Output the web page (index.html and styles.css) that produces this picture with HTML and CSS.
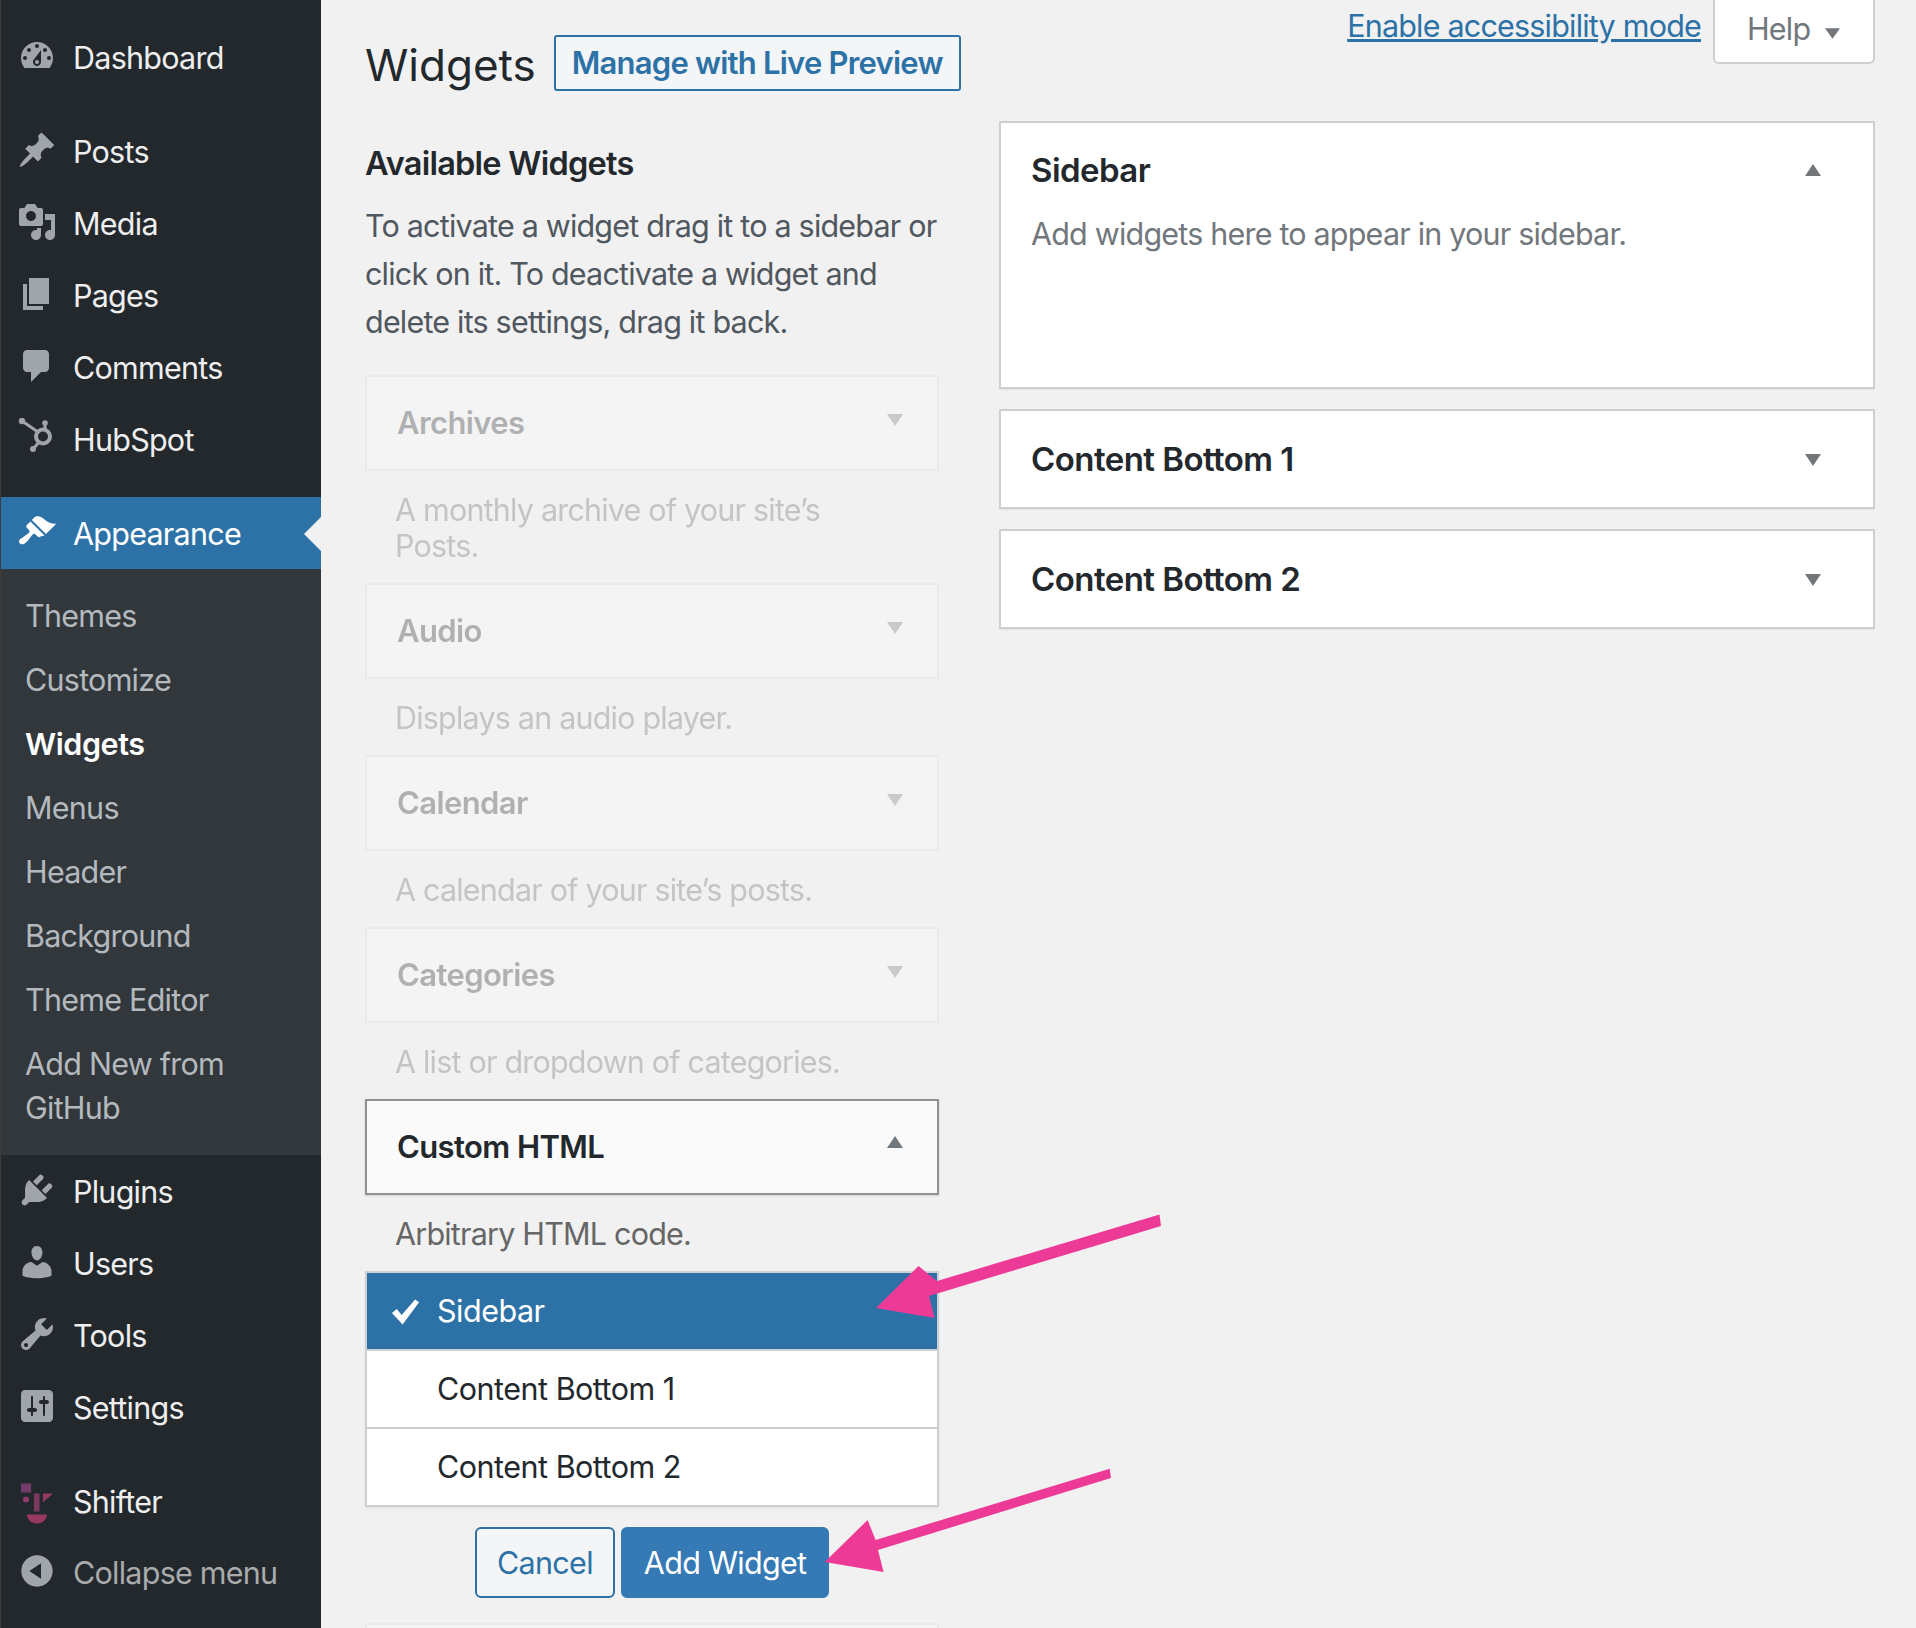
FILE: index.html
```html
<!DOCTYPE html>
<html lang="en">
<head>
<meta charset="utf-8">
<title>Widgets</title>
<link rel="stylesheet" href="styles.css">
</head>
<body>
<div class="page">
  <nav class="menu">
    <a class="item first"><svg class="ico" viewBox="0 0 20 20"><path fill-rule="evenodd" d="M3.76 16h12.48c1.1-1.37 1.76-3.11 1.76-5 0-4.42-3.58-8-8-8s-8 3.58-8 8c0 1.89.66 3.63 1.76 5zM10 4c.55 0 1 .45 1 1s-.45 1-1 1-1-.45-1-1 .45-1 1-1zM6 6c.55 0 1 .45 1 1s-.45 1-1 1-1-.45-1-1 .45-1 1-1zm8 0c.55 0 1 .45 1 1s-.45 1-1 1-1-.45-1-1 .45-1 1-1zm-5.37 5.55L12 7v6c0 1.1-.9 2-2 2s-2-.9-2-2c0-.57.24-1.08.63-1.45zM4 10c.55 0 1 .45 1 1s-.45 1-1 1-1-.45-1-1 .45-1 1-1zm12 0c.55 0 1 .45 1 1s-.45 1-1 1-1-.45-1-1 .45-1 1-1zm-5 3c0-.55-.45-1-1-1s-1 .45-1 1 .45 1 1 1 1-.45 1-1z"/></svg>Dashboard</a>
    <a class="item gap"><svg class="ico" viewBox="0 0 20 20"><path d="M10.44 3.02l1.82-1.82 6.36 6.35-1.83 1.82c-1.05-.68-2.48-.57-3.41.36l-.75.75c-.92.93-1.04 2.35-.35 3.41l-1.83 1.82-2.41-2.41-2.8 2.79c-.42.42-3.38 2.71-3.8 2.29s1.86-3.39 2.28-3.81l2.79-2.79L4.1 9.36l1.83-1.82c1.05.69 2.48.57 3.4-.36l.75-.75c.93-.92 1.05-2.35.36-3.41z"/></svg>Posts</a>
    <a class="item"><svg class="ico" viewBox="0 0 20 20"><path fill-rule="evenodd" d="M13 11V4c0-.55-.45-1-1-1h-1.67L9 1H5L3.67 3H2c-.55 0-1 .45-1 1v7c0 .55.45 1 1 1h10c.55 0 1-.45 1-1zM7 4.5c1.38 0 2.5 1.12 2.5 2.5S8.38 9.5 7 9.5 4.5 8.38 4.5 7 5.62 4.5 7 4.5zM14 6h5v10.5c0 1.38-1.12 2.5-2.5 2.5S14 17.88 14 16.5s1.12-2.5 2.5-2.5c.17 0 .34.02.5.05V9h-3V6zm-4 8.05V13h2v3.5c0 1.38-1.12 2.5-2.5 2.5S7 17.88 7 16.5 8.12 14 9.5 14c.17 0 .34.02.5.05z"/></svg>Media</a>
    <a class="item"><svg class="ico" viewBox="0 0 20 20"><path d="M6 15V2h10v13H6zm-1 1h8v2H3V5h2v11z"/></svg>Pages</a>
    <a class="item"><svg class="ico" viewBox="0 0 20 20"><path d="M5 2h9c1.1 0 2 .9 2 2v7c0 1.1-.9 2-2 2h-2l-5 5v-5H5c-1.1 0-2-.9-2-2V4c0-1.1.9-2 2-2z"/></svg>Comments</a>
    <a class="item"><svg class="ico" viewBox="0 0 40 40"><circle class="line" cx="26" cy="18.5" r="7"/><path class="line thin" d="M5 3l16 11M28 5v7M17 30l5-6"/><circle cx="5" cy="3" r="3.2"/><circle cx="28" cy="5" r="2.8"/><circle cx="16" cy="31" r="3"/></svg>HubSpot</a>
    <a class="item gap current"><svg class="ico" viewBox="0 0 20 20"><path d="M14.48 11.06L7.41 3.99l1.5-1.5c.5-.56 2.3-.47 3.51.32 1.21.8 1.43 1.28 2.91 2.1 1.18.64 2.45 1.26 4.45.85zm-.71.71L6.7 4.7 4.93 6.47c-.39.39-.39 1.02 0 1.41l1.06 1.06c.39.39.39 1.03 0 1.42-.6.6-1.43 1.11-2.21 1.69-.35.26-.7.53-1.01.84C1.43 13.23.4 14.67 1.47 15.74c1.06 1.06 2.5.04 3.84-1.3.31-.31.58-.66.85-1.01.57-.78 1.08-1.61 1.69-2.21.39-.39 1.02-.39 1.41 0l1.06 1.06c.39.39 1.02.39 1.41 0z"/></svg>Appearance</a>
    <div class="sub">
      <a class="subitem">Themes</a>
      <a class="subitem">Customize</a>
      <a class="subitem on">Widgets</a>
      <a class="subitem">Menus</a>
      <a class="subitem">Header</a>
      <a class="subitem">Background</a>
      <a class="subitem">Theme Editor</a>
      <a class="subitem wrap">Add New from GitHub</a>
    </div>
    <a class="item"><svg class="ico" viewBox="0 0 20 20"><path d="M13.11 4.36L9.87 7.6 8 5.73l3.24-3.24c.35-.34 1.05-.2 1.56.32.52.51.66 1.21.31 1.55zm-8 1.77l.91-1.12 9.01 9.01-1.19.84c-.71.71-2.63 1.16-3.82 1.16H6.14L4.9 17.26c-.59.59-1.54.59-2.12 0-.59-.58-.59-1.53 0-2.12l1.24-1.24v-3.88c0-1.13.4-3.19 1.09-3.89zm7.26 3.97l3.24-3.24c.34-.35 1.04-.21 1.55.31.52.51.66 1.21.31 1.55l-3.24 3.25z"/></svg>Plugins</a>
    <a class="item"><svg class="ico" viewBox="0 0 20 20"><path d="M10 9.25c-2.27 0-2.73-3.44-2.73-3.44C7 4.02 7.82 2 9.97 2c2.16 0 2.98 2.02 2.71 3.81 0 0-.41 3.44-2.68 3.44zm0 2.57L12.72 10c2.39 0 4.52 2.33 4.52 4.53v2.49s-3.65 1.13-7.24 1.13c-3.65 0-7.24-1.13-7.24-1.13v-2.49c0-2.25 1.94-4.48 4.47-4.48z"/></svg>Users</a>
    <a class="item"><svg class="ico" viewBox="0 0 20 20"><path fill-rule="evenodd" d="M16.68 9.77c-1.34 1.34-3.3 1.67-4.95.99l-5.41 6.52c-.99.99-2.59.99-3.58 0s-.99-2.59 0-3.57l6.52-5.42c-.68-1.65-.35-3.61.99-4.95 1.28-1.28 3.12-1.62 4.72-1.06l-2.89 2.89 2.82 2.82 2.86-2.87c.53 1.58.18 3.39-1.08 4.65zM3.81 16.21c.4.39 1.04.39 1.43 0 .4-.4.4-1.04 0-1.43-.39-.4-1.03-.4-1.43 0-.39.39-.39 1.03 0 1.43z"/></svg>Tools</a>
    <a class="item"><svg class="ico" viewBox="0 0 20 20"><path fill-rule="evenodd" d="M18 16V4c0-1.1-.9-2-2-2H4c-1.1 0-2 .9-2 2v12c0 1.1.9 2 2 2h12c1.1 0 2-.9 2-2zM8 11h1c.55 0 1 .45 1 1s-.45 1-1 1H8v1.5c0 .28-.22.5-.5.5s-.5-.22-.5-.5V13H6c-.55 0-1-.45-1-1s.45-1 1-1h1V5.5c0-.28.22-.5.5-.5s.5.22.5.5V11zm5-2h-1c-.55 0-1-.45-1-1s.45-1 1-1h1V5.5c0-.28.22-.5.5-.5s.5.22.5.5V7h1c.55 0 1 .45 1 1s-.45 1-1 1h-1v5.5c0 .28-.22.5-.5.5s-.5-.22-.5-.5V9z"/></svg>Settings</a>
    <a class="item gap"><svg class="ico visible" viewBox="0 0 40 40"><rect class="s1" x="4" y="3.5" width="10" height="9"/><circle class="s2" cx="9" cy="19.5" r="3"/><rect class="s3" x="17" y="13.5" width="5.5" height="18"/><path class="s4" d="M26 13.5h10l-10 9z"/><path class="s5" d="M10 34.5h20c0 5-4.5 9-10 9s-10-4-10-9z"/></svg>Shifter</a>
    <a class="item collapse"><svg class="ico" viewBox="0 0 20 20"><path fill-rule="evenodd" d="M10 2.16c4.33 0 7.84 3.51 7.84 7.84s-3.51 7.84-7.84 7.84S2.16 14.33 2.16 10 5.71 2.16 10 2.16zm2 11.72V6.12L6.18 9.97z"/></svg>Collapse menu</a>
  </nav>

  <main class="main">
    <header class="head">
      <h1 class="title">Widgets</h1>
      <a class="live">Manage with Live Preview</a>
      <div class="meta">
        <a class="access">Enable accessibility mode</a>
        <div class="help">Help<svg class="help-arrow" viewBox="0 0 14 10"><path d="M0 0h14L7 10z"/></svg></div>
      </div>
    </header>
    <div class="cols">
      <section class="avail">
        <h2 class="avail-title">Available Widgets</h2>
        <p class="intro">To activate a widget drag it to a sidebar or click on it. To deactivate a widget and delete its settings, drag it back.</p>

        <div class="faded">
          <div class="widget"><span>Archives</span><svg class="tri" viewBox="0 0 16 12"><path d="M0 0h16L8 12z"/></svg></div>
          <p class="desc">A monthly archive of your site’s Posts.</p>
          <div class="widget"><span>Audio</span><svg class="tri" viewBox="0 0 16 12"><path d="M0 0h16L8 12z"/></svg></div>
          <p class="desc">Displays an audio player.</p>
          <div class="widget"><span>Calendar</span><svg class="tri" viewBox="0 0 16 12"><path d="M0 0h16L8 12z"/></svg></div>
          <p class="desc">A calendar of your site’s posts.</p>
          <div class="widget"><span>Categories</span><svg class="tri" viewBox="0 0 16 12"><path d="M0 0h16L8 12z"/></svg></div>
          <p class="desc">A list or dropdown of categories.</p>
        </div>

        <div class="widget open"><span>Custom HTML</span><svg class="tri up" viewBox="0 0 16 12"><path d="M8 0l8 12H0z"/></svg></div>
        <p class="desc">Arbitrary HTML code.</p>
        <ul class="chooser">
          <li class="choice selected"><svg class="check" viewBox="0 0 30 26"><path d="M1 14l5-4 5 6L25 0l4 3-17 23z"/></svg>Sidebar</li>
          <li class="choice">Content Bottom 1</li>
          <li class="choice">Content Bottom 2</li>
        </ul>
        <div class="actions">
          <a class="btn">Cancel</a>
          <a class="btn primary">Add Widget</a>
        </div>
        <div class="faded"><div class="widget"></div></div>
      </section>

      <section class="areas">
        <div class="area tall">
          <div class="area-head"><span>Sidebar</span><svg class="tri" viewBox="0 0 16 12"><path d="M8 0l8 12H0z"/></svg></div>
          <p class="area-desc">Add widgets here to appear in your sidebar.</p>
        </div>
        <div class="area">
          <div class="area-head"><span>Content Bottom 1</span><svg class="tri" viewBox="0 0 16 12"><path d="M0 0h16L8 12z"/></svg></div>
        </div>
        <div class="area">
          <div class="area-head"><span>Content Bottom 2</span><svg class="tri" viewBox="0 0 16 12"><path d="M0 0h16L8 12z"/></svg></div>
        </div>
      </section>
    </div>
  </main>

  <svg class="arrows" viewBox="0 0 1916 1628">
    <path d="M876 1308L918.5 1266L937 1281L1159.5 1214.6L1161 1226L929 1296L934.6 1318z"/>
    <path d="M824.7 1562L867.6 1520L875.6 1540L1109.7 1468.7L1111 1478L878 1550L883.6 1572z"/>
  </svg>
</div>
</body>
</html>
```
FILE: styles.css
```css
* { box-sizing: border-box; }
html, body { margin: 0; padding: 0; }
body {
  width: 1916px;
  height: 1628px;
  overflow: hidden;
  background: #f1f1f1;
  font-family: Inter, "Noto Sans", "Liberation Sans", sans-serif;
  font-size: 30.5px;
  letter-spacing: -0.8px;
  color: #23282d;
}
a { text-decoration: none; color: inherit; }
p, h1, h2, ul { margin: 0; padding: 0; list-style: none; }
.page { position: relative; display: flex; width: 1916px; height: 1628px; overflow: hidden; }

/* admin menu */
.menu {
  flex: 0 0 321px;
  height: 1628px;
  padding-top: 21px;
  background: #23282d;
  border-left: 1px solid #3a3c3e;
  color: #eee;
  letter-spacing: -0.75px;
}
.item { position: relative; display: flex; align-items: center; height: 72px; padding-left: 72px; }
.item.gap { margin-top: 22px; }
.ico {
  position: absolute;
  left: 16px;
  top: 14.5px;
  width: 40px;
  height: 40px;
  fill: #a0a5aa;
}
.ico.visible { overflow: visible; }
.line { fill: none; stroke: #a0a5aa; stroke-width: 4; }
.line.thin { stroke-width: 3; }
.s1 { fill: #743a6c; }
.s2 { fill: #8f3c68; }
.s3 { fill: #7d3860; }
.s4 { fill: #8f3b62; }
.s5 { fill: #983a60; }
.current { background: #2d72a7; color: #fff; }
.current .ico { fill: #fff; }
.current::after {
  content: "";
  position: absolute;
  right: 0;
  top: 20px;
  border: 17px solid transparent;
  border-right-color: #f1f1f1;
  border-left-width: 0;
}
.collapse { color: #a8aaac; margin-top: -1px; }
.sub { background: #32373c; height: 586px; padding-top: 15px; color: #b4b9be; }
.subitem { display: block; height: 64px; line-height: 63px; padding-left: 24px; }
.subitem.on { color: #fff; font-weight: 600; letter-spacing: -0.4px; }
.subitem.wrap { height: auto; line-height: 44px; padding: 9.5px 70px 0 24px; }

/* main */
.main { flex: 1; display: flex; flex-direction: column; padding: 0 41px 0 44px; min-width: 0; }
.head { display: flex; align-items: flex-start; height: 121px; flex: none; }
.title { font-size: 44px; font-weight: 400; line-height: 60px; margin-top: 35px; letter-spacing: 0; }
.live {
  margin: 35px 0 0 18px;
  height: 56px;
  line-height: 52px;
  padding: 0 16px;
  border: 2px solid #2d72a7;
  border-radius: 3px;
  background: #f3f5f6;
  color: #2d72a7;
  font-size: 31px;
  letter-spacing: -0.78px;
  font-weight: 600;
}
.meta { margin-left: auto; display: flex; align-items: flex-start; }
.access { color: #2d72a7; text-decoration: underline; line-height: 52px; margin-right: 12px; }
.help {
  width: 162px;
  height: 64px;
  padding: 0 0 4px 32px;
  line-height: 42px;
  background: #fff;
  border: 2px solid #ccd0d4;
  border-top: 0;
  border-radius: 0 0 6px 6px;
  color: #72777c;
  display: flex;
  align-items: center;
}
.help-arrow { width: 15px; height: 11px; margin: 9px 0 0 15px; fill: #72777c; }

.cols { display: flex; align-items: flex-start; gap: 60px; }
.avail { flex: 0 0 574px; }
.avail-title { font-size: 32.5px; letter-spacing: -0.75px; font-weight: 600; line-height: 46px; margin-top: 20px; }
.intro { margin: 15px 0 28.5px; line-height: 48px; color: #50575e; }

.widget {
  display: flex;
  align-items: center;
  justify-content: space-between;
  height: 96px;
  padding: 0 34px 0 30px;
  background: #fafafa;
  border: 2px solid #ccd0d4;
  font-weight: 600;
  font-size: 31px;
  letter-spacing: -0.6px;
}
.widget.open { border-color: #8f9295; box-shadow: 0 1px 2px rgba(0,0,0,.12); }
.tri { flex: none; width: 16px; height: 12px; margin-bottom: 6px; fill: #72777c; }
.tri.up { margin-bottom: 9px; }
.desc { padding: 21px 45px 19px 30px; line-height: 36px; color: #666; }
.faded { opacity: .32; }
.faded .widget { border-color: #d8dbde; }

.chooser { background: #fff; border: 2px solid #ccd0d4; box-shadow: 0 1px 2px rgba(0,0,0,.08); letter-spacing: -0.5px; }
.choice {
  position: relative;
  height: 78px;
  padding: 0 0 0 70px;
  display: flex;
  align-items: center;
  border-bottom: 2px solid #ccd0d4;
}
.choice:last-child { height: 76px; border-bottom: 0; }
.selected { background: #2d72a7; color: #fff; }
.check { position: absolute; left: 24px; top: 26px; width: 29px; height: 26px; fill: #fff; }

.actions { display: flex; gap: 6px; margin: 20px 0 25px; padding-left: 110px; letter-spacing: -0.7px; }
.btn {
  height: 71px;
  line-height: 67px;
  padding: 0 20px;
  border: 2px solid #2d72a7;
  border-radius: 6px;
  background: #f3f5f6;
  color: #2d72a7;
}
.btn.primary { background: #3579b5; border-color: #3579b5; color: #fff; padding: 0 21px; }

.areas { flex: 1; display: flex; flex-direction: column; gap: 20px; }
.area { height: 100px; background: #fff; border: 2px solid #ccd0d4; box-shadow: 0 1px 1px rgba(0,0,0,.05); }
.area.tall { height: 268px; }
.area-head {
  display: flex;
  align-items: center;
  justify-content: space-between;
  height: 96px;
  padding: 0 52px 0 30px;
  font-weight: 600;
  font-size: 33px;
  letter-spacing: -0.55px;
}
.tall .area-head { height: 94px; }
.area-head .tri { margin: 2px 0 0; }
.tall .area-head .tri { margin: 0; }
.area-desc { padding: 0 0 0 30px; line-height: 34px; color: #72777c; }

/* annotation arrows over the screenshot */
.arrows { position: absolute; left: 0; top: 0; width: 1916px; height: 1628px; fill: #ee3a97; pointer-events: none; }
```
